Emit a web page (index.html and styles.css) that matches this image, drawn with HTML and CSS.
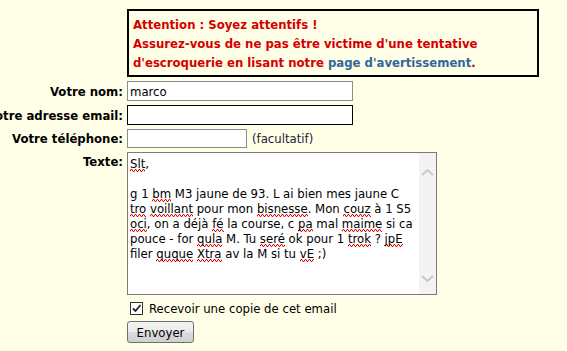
FILE: index.html
```html
<!DOCTYPE html>
<html lang="fr">
<head>
    <meta charset="UTF-8">
    <title>Contact</title>
    <link rel="stylesheet" href="styles.css">
</head>
<body>
    <div class="page">
        <div class="notice">
            Attention : Soyez attentifs !<br>
            Assurez-vous de ne pas être victime d'une tentative<br>
            d'escroquerie en lisant notre <a href="#">page d'avertissement</a>.
        </div>

        <form class="contact">
            <label class="label" for="nom">Votre nom:</label>
            <div class="field"><input class="input input-name" id="nom" type="text" value="marco"></div>

            <label class="label" for="email">Votre adresse email:</label>
            <div class="field"><input class="input input-email" id="email" type="text"></div>

            <label class="label" for="tel">Votre téléphone:</label>
            <div class="field"><input class="input input-tel" id="tel" type="text"> <span class="hint">(facultatif)</span></div>

            <label class="label label-top">Texte:</label>
            <div class="field">
                <div class="textbox">
                    <div class="textbox-text">
                        <span class="typo">Slt</span>,<br>
                        <br>
                        g 1 <span class="typo">bm</span> M3 jaune de 93. L ai bien mes jaune C<br>
                        <span class="typo">tro</span> <span class="typo">voillant</span> pour mon <span class="typo">bisnesse</span>. Mon <span class="typo">couz</span> à 1 S5<br>
                        <span class="typo">oci</span>, on a déjà <span class="typo">fé</span> la course, c <span class="typo">pa</span> mal <span class="typo">maime</span> si ca<br>
                        pouce - for <span class="typo">qula</span> M. Tu <span class="typo">seré</span> ok pour 1 <span class="typo">trok</span> ? <span class="typo">jpE</span><br>
                        filer <span class="typo">ququе</span> <span class="typo">Xtra</span> av la M si tu <span class="typo">vE</span> ;)
                    </div>
                    <div class="scrollbar">
                        <svg width="17" height="12" viewBox="0 0 17 12"><path d="M3 8 L8.5 3 L14 8" fill="none" stroke="#c8c8c8" stroke-width="2"/></svg>
                        <svg width="17" height="12" viewBox="0 0 17 12"><path d="M3 4 L8.5 9 L14 4" fill="none" stroke="#c8c8c8" stroke-width="2"/></svg>
                    </div>
                </div>
            </div>

            <div></div>
            <div class="field copy">
                <span class="check">
                    <svg width="13" height="13" viewBox="0 0 13 13"><rect x="0.5" y="0.5" width="12" height="12" fill="#fff" stroke="#333"/><path d="M3 6.5 L5.5 9 L10.5 3" fill="none" stroke="#222" stroke-width="1.8"/></svg>
                </span>
                Recevoir une copie de cet email
            </div>

            <div></div>
            <div class="field"><button type="button" class="button">Envoyer</button></div>
        </form>
    </div>
</body>
</html>
```

FILE: styles.css
```css
body {
    margin: 0;
    background-color: #ffffe8;
    font-family: "DejaVu Sans Condensed", "DejaVu Sans", sans-serif;
    font-size: 13px;
    color: #000;
}

.page {
    padding-top: 9px;
}

.notice {
    margin-left: 127px;
    width: 400px;
    border: 2px solid #000;
    padding: 4px 4px 3px 4px;
    line-height: 19px;
    font-weight: bold;
    color: #d40000;
}

.notice a {
    color: #336699;
    text-decoration: none;
}

.contact {
    display: grid;
    grid-template-columns: 123px auto;
    column-gap: 4px;
    row-gap: 4px;
    margin-top: 4px;
}

.label {
    display: flex;
    justify-content: flex-end;
    align-items: center;
    white-space: nowrap;
    font-weight: bold;
}

.label-top {
    align-items: flex-start;
    padding-top: 2px;
}

.field {
    display: flex;
    align-items: center;
}

.input {
    box-sizing: border-box;
    height: 20px;
    border: 1px solid #8c8c8c;
    padding: 0 2px;
    font-family: inherit;
    font-size: 13px;
    background: #fff;
    color: #000;
    outline: none;
}

.input-name {
    width: 226px;
}

.input-email {
    width: 226px;
    border-color: #000;
}

.input-tel {
    width: 120px;
    height: 19px;
}

.hint {
    margin-left: 5px;
    color: #1c1c3c;
}

.textbox {
    box-sizing: border-box;
    display: flex;
    width: 310px;
    height: 143px;
    border: 1px solid #7a7a7a;
    background: #fff;
}

.textbox-text {
    flex: 1;
    padding: 3px 2px 2px 2px;
    line-height: 15px;
    white-space: nowrap;
    overflow: hidden;
}

.typo {
    background-image: url("data:image/svg+xml,%3Csvg xmlns='http://www.w3.org/2000/svg' width='4' height='3'%3E%3Cpath d='M0 2.5 L1 0.5 L2 0.5 L3 2.5 L4 2.5' fill='none' stroke='%23e00000' stroke-width='1'/%3E%3C/svg%3E");
    background-repeat: repeat-x;
    background-position: 0 100%;
    background-size: 4px 3px;
    padding-bottom: 1px;
}

.scrollbar {
    width: 17px;
    background: #f3f3f3;
    display: flex;
    flex-direction: column;
    justify-content: space-between;
    padding: 14px 0 10px 0;
}

.copy {
    padding-left: 3px;
    height: 18px;
}

.check {
    display: flex;
    margin-right: 6px;
}

.button {
    width: 67px;
    height: 22px;
    border: 1px solid #707070;
    border-radius: 3px;
    background: linear-gradient(#f2f2f2, #ebebeb 50%, #dddddd 50%, #cfcfcf);
    font-family: inherit;
    font-size: 13px;
    color: #000;
    padding: 0;
}
```
